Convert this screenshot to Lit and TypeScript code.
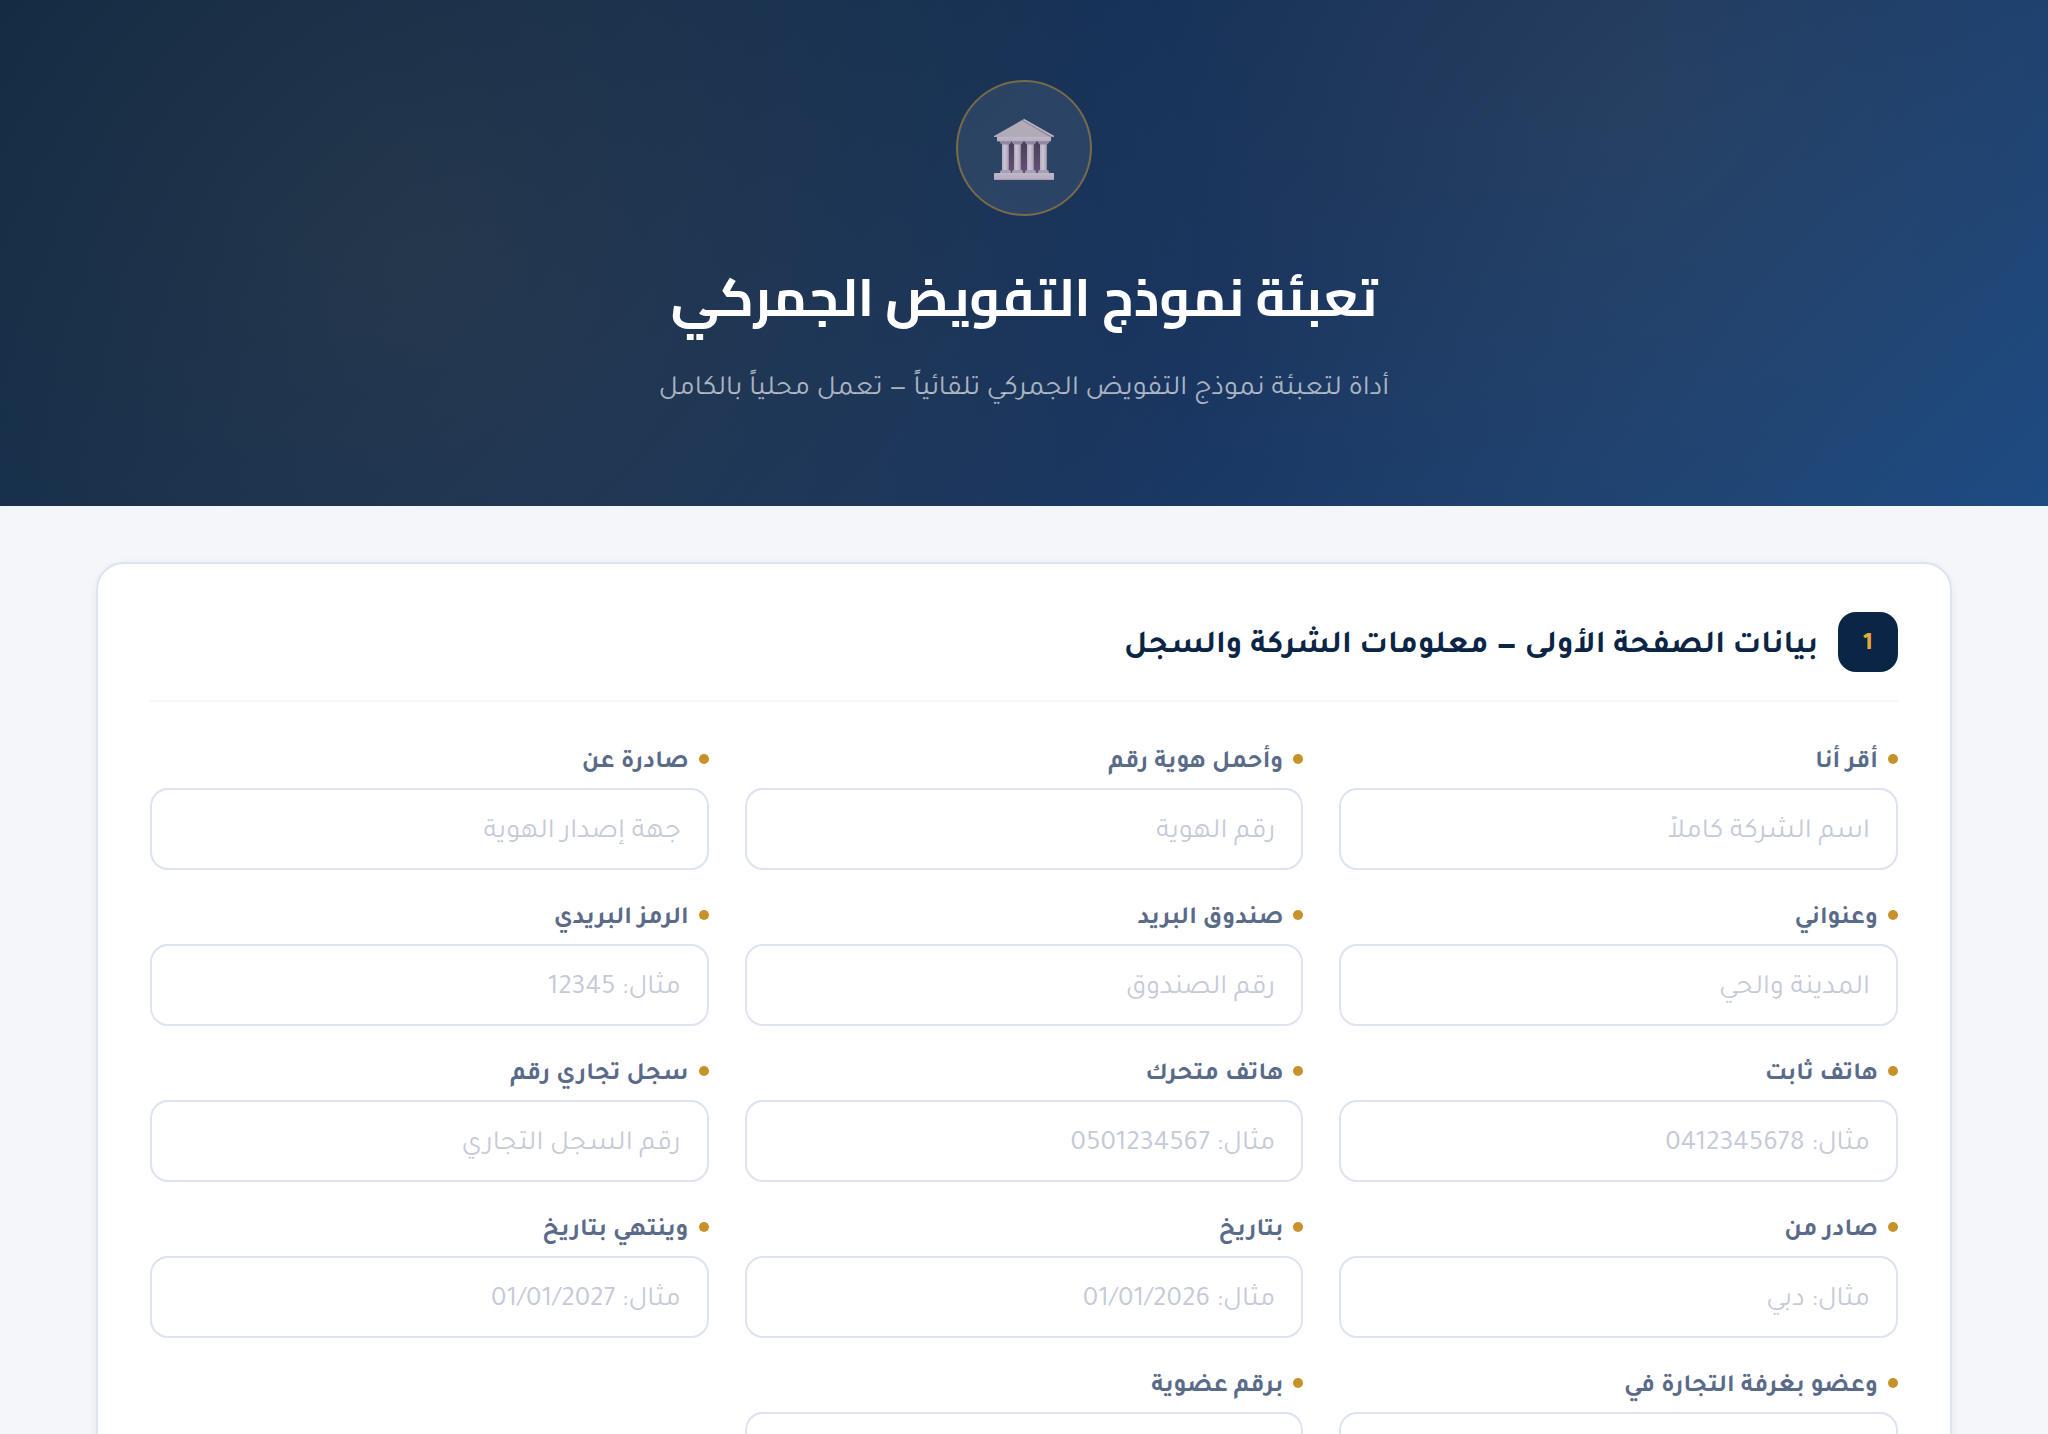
import { LitElement, html, css, svg } from "lit";
import { customElement, property } from "lit/decorators.js";

interface Field {
  id: string;
  label: string;
  placeholder: string;
}

const FIELDS: Field[] = [
  { id: "declarant", label: "أقر أنا", placeholder: "اسم الشركة كاملاً" },
  { id: "identity", label: "وأحمل هوية رقم", placeholder: "رقم الهوية" },
  { id: "issuer", label: "صادرة عن", placeholder: "جهة إصدار الهوية" },
  { id: "address", label: "وعنواني", placeholder: "المدينة والحي" },
  { id: "po-box", label: "صندوق البريد", placeholder: "رقم الصندوق" },
  { id: "postcode", label: "الرمز البريدي", placeholder: "مثال: 12345" },
  { id: "landline", label: "هاتف ثابت", placeholder: "مثال: 0412345678" },
  { id: "mobile", label: "هاتف متحرك", placeholder: "مثال: 0501234567" },
  { id: "register", label: "سجل تجاري رقم", placeholder: "رقم السجل التجاري" },
  { id: "issued-in", label: "صادر من", placeholder: "مثال: دبي" },
  { id: "issued-on", label: "بتاريخ", placeholder: "مثال: 01/01/2026" },
  { id: "expires-on", label: "وينتهي بتاريخ", placeholder: "مثال: 01/01/2027" },
  { id: "chamber", label: "وعضو بغرفة التجارة في", placeholder: "" },
  { id: "membership", label: "برقم عضوية", placeholder: "" },
];

@customElement("form-field")
export class FormField extends LitElement {
  @property({ attribute: false }) field!: Field;

  static styles = css`
    :host {
      display: flex;
      flex-direction: column;
      min-width: 0;
    }
    .label {
      display: flex;
      align-items: flex-start;
      gap: 10px;
      font-size: 25px;
      font-weight: 700;
      line-height: 48px;
      color: #5a6b8a;
    }
    .label::before {
      content: "";
      width: 10px;
      height: 10px;
      margin-top: 14px;
      border-radius: 50%;
      background: #c8922a;
    }
    .input {
      box-sizing: border-box;
      width: 100%;
      height: 82px;
      padding: 8px 26px 0;
      border: 2px solid #dde3f0;
      border-radius: 18px;
      background: #fff;
      color: #0a2545;
      font: inherit;
      font-size: 28px;
      outline: none;
    }
    .input::placeholder {
      color: #c5cad8;
      opacity: 1;
    }
    .input:focus {
      border-color: #c8922a;
    }
  `;

  render() {
    const { id, label, placeholder } = this.field;
    return html`
      <label class="label" for=${id}>${label}</label>
      <input class="input" id=${id} name=${id} type="text" placeholder=${placeholder} />
    `;
  }
}

@customElement("app-root")
export class AppRoot extends LitElement {
  static styles = css`
    :host {
      display: block;
      direction: rtl;
      min-height: 100vh;
      background: #f4f6fa;
      color: #0a2545;
      font-family: Tajawal, "Noto Sans", sans-serif;
    }
    .hero {
      display: flex;
      flex-direction: column;
      align-items: center;
      padding: 80px 48px 90px;
      background:
        radial-gradient(circle at 20% 50%, rgba(200, 146, 42, 0.1), transparent 800px),
        radial-gradient(circle at 80% 20%, rgba(200, 146, 42, 0.07), transparent 560px),
        linear-gradient(135deg, #0c2744 0%, #19355f 60%, #1e4b82 100%);
      text-align: center;
    }
    .emblem {
      display: flex;
      align-items: center;
      justify-content: center;
      box-sizing: border-box;
      width: 136px;
      height: 136px;
      padding-top: 2px;
      border: 2px solid rgba(200, 146, 42, 0.5);
      border-radius: 50%;
      background: rgba(255, 255, 255, 0.08);
    }
    .temple {
      width: 60px;
      height: 62px;
    }
    .title {
      margin: 40px 0 0;
      font-family: Cairo, Tajawal, sans-serif;
      font-size: 52px;
      font-weight: 700;
      line-height: 82px;
      color: #fff;
    }
    .subtitle {
      margin: 26px 0 0;
      font-size: 28px;
      line-height: 52px;
      color: rgba(255, 255, 255, 0.65);
    }
    .content {
      padding: 56px 96px;
    }
    .card {
      padding: 48px 52px;
      border: 2px solid #dde3f0;
      border-radius: 28px;
      background: #fff;
      box-shadow: 0 2px 8px rgba(10, 37, 69, 0.06);
    }
    .card-head {
      display: flex;
      align-items: center;
      gap: 20px;
      margin-bottom: 38px;
      padding-bottom: 28px;
      border-bottom: 2px solid #f4f6fa;
    }
    .step {
      display: flex;
      align-items: center;
      justify-content: center;
      box-sizing: border-box;
      width: 60px;
      height: 60px;
      padding-top: 6px;
      border-radius: 18px;
      background: #0a2545;
      color: #e8a83a;
      font-size: 26px;
      font-weight: 700;
    }
    .card-title {
      margin: 0;
      padding-top: 10px;
      font-size: 32px;
      font-weight: 700;
      line-height: 50px;
    }
    .fields {
      display: grid;
      grid-template-columns: repeat(3, minmax(0, 1fr));
      gap: 26px 36px;
    }
    @media (max-width: 1000px) {
      .content {
        padding: 32px 24px;
      }
      .fields {
        grid-template-columns: minmax(0, 1fr);
      }
    }
  `;

  private temple() {
    return html`
      <svg class="temple" viewBox="0 0 60 62" aria-hidden="true">
        <defs>
          <linearGradient id="column" x1="0" x2="1" y1="0" y2="0">
            <stop offset="0" stop-color="#b5adbf" />
            <stop offset="0.4" stop-color="#cac3d3" />
            <stop offset="0.75" stop-color="#b8b0c2" />
            <stop offset="1" stop-color="#8f859c" />
          </linearGradient>
          <linearGradient id="inside" x1="0" x2="0" y1="0" y2="1">
            <stop offset="0" stop-color="#484055" />
            <stop offset="1" stop-color="#665078" />
          </linearGradient>
          <linearGradient id="slab" x1="0" x2="0" y1="0" y2="1">
            <stop offset="0" stop-color="#c0b7ca" />
            <stop offset="0.8" stop-color="#b6adc2" />
            <stop offset="1" stop-color="#9c92ab" />
          </linearGradient>
        </defs>
        <rect x="10" y="23" width="40" height="32" fill="url(#inside)" />
        ${[8, 20, 33, 46].map(
          (x) => svg`
            <rect x=${x} y="25" width="7" height="28" fill="url(#column)" />
            <path d="M${x - 2} 23h11v1.500q-1 1.500-2 2h-7q-1-.500-2-2Z" fill="#92879f" />
            <path d="M${x} 52h7q2 0 2 3h-11q0-3 2-3Z" fill="#a89eb5" />`,
        )}
        <path d="M30 1 L60 18 V19 H0 V18 Z" fill="#b1aab7" />
        <path d="M30 1 L60 18 V19 H56 L28.500 3 Z" fill="#92889f" />
        <path d="M30 1 L60 18 L59 19 L30 2.500 Z" fill="#beb6c6" />
        <rect x="3" y="19" width="54" height="4.500" fill="url(#slab)" />
        <rect x="0" y="55" width="60" height="7" rx="0.500" fill="url(#slab)" />
      </svg>
    `;
  }

  render() {
    return html`
      <header class="hero">
        <div class="emblem">${this.temple()}</div>
        <h1 class="title">تعبئة نموذج التفويض الجمركي</h1>
        <p class="subtitle">أداة لتعبئة نموذج التفويض الجمركي تلقائياً — تعمل محلياً بالكامل</p>
      </header>
      <main class="content">
        <section class="card">
          <div class="card-head">
            <span class="step">1</span>
            <h2 class="card-title">بيانات الصفحة الأولى — معلومات الشركة والسجل</h2>
          </div>
          <form class="fields">
            ${FIELDS.map((field) => html`<form-field .field=${field}></form-field>`)}
          </form>
        </section>
      </main>
    `;
  }
}
